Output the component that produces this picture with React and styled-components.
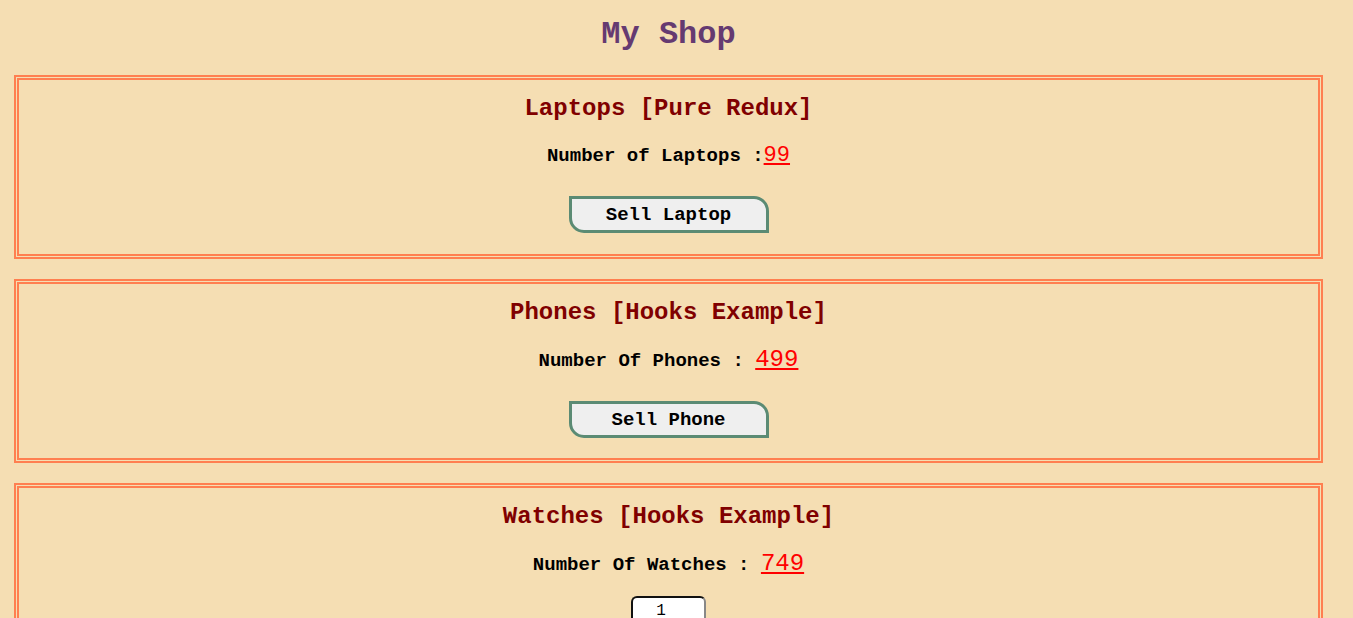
import styled, { createGlobalStyle } from "styled-components";

const WHEAT = "#f5deb3";
const CORAL = "#ff7f50";
const MAROON = "#800000";
const RED = "#ff0000";
const PURPLE = "#653a71";
const SAGE = "#5b8b74";

const GlobalStyle = createGlobalStyle`
  html, body {
    margin: 0;
    background-color: ${WHEAT};
  }

  body {
    font-family: "Liberation Mono", "Courier New", monospace;
    color: #000;
  }
`;

const Page = styled.div`
  display: flex;
  flex-direction: column;
  padding: 0 30px 20px 14px;
`;

const Heading = styled.h1`
  margin: 17px 0 22px;
  font-size: 32px;
  line-height: 36px;
  font-weight: bold;
  text-align: center;
  color: ${PURPLE};
`;

const Store = styled.section`
  display: flex;
  flex-direction: column;
  align-items: center;
  box-sizing: border-box;
  min-height: 184px;
  margin-bottom: 20px;
  padding: 15px 0 20px;
  border: 5px double ${CORAL};
`;

const Title = styled.h2`
  margin: 0;
  font-size: 24px;
  line-height: 28px;
  font-weight: bold;
  color: ${MAROON};
`;

const Count = styled.h3`
  margin: 19px 0 0;
  font-size: 19px;
  line-height: 28px;
  font-weight: bold;
`;

const Amount = styled.span`
  font-size: ${({ size }) => size || "24px"};
  font-weight: normal;
  color: ${RED};
  text-decoration: underline;
`;

const SellButton = styled.button`
  box-sizing: border-box;
  width: 200px;
  height: 37px;
  margin-top: 26px;
  padding: 0;
  border: 3px solid ${SAGE};
  border-radius: 0 15px 0 15px;
  background-color: #efefef;
  font-family: "Liberation Mono", "Courier New", monospace;
  font-size: 19px;
  font-weight: bold;
  color: #000;
  cursor: pointer;
`;

const QuantityInput = styled.input`
  box-sizing: border-box;
  width: 75px;
  height: 30px;
  margin-top: 17px;
  padding: 0 17px 0 2px;
  border-style: solid;
  border-width: 2px;
  border-color: #111 #888 #888 #111;
  border-radius: 6px;
  background-color: #fff;
  font-family: "Liberation Mono", "Courier New", monospace;
  font-size: 16px;
  text-align: center;
  color: #000;
`;

const App = () => {
  return (
    <>
      <GlobalStyle />
      <Page>
        <Heading>My Shop</Heading>

        <Store>
          <Title>Laptops [Pure Redux]</Title>
          <Count>
            Number of Laptops :<Amount size="22px">99</Amount>
          </Count>
          <SellButton>Sell Laptop</SellButton>
        </Store>

        <Store>
          <Title>Phones [Hooks Example]</Title>
          <Count>
            Number Of Phones : <Amount>499</Amount>
          </Count>
          <SellButton>Sell Phone</SellButton>
        </Store>

        <Store>
          <Title>Watches [Hooks Example]</Title>
          <Count>
            Number Of Watches : <Amount>749</Amount>
          </Count>
          <QuantityInput type="text" defaultValue="1" />
          <SellButton>Sell Watch</SellButton>
        </Store>
      </Page>
    </>
  );
};

export default App;
